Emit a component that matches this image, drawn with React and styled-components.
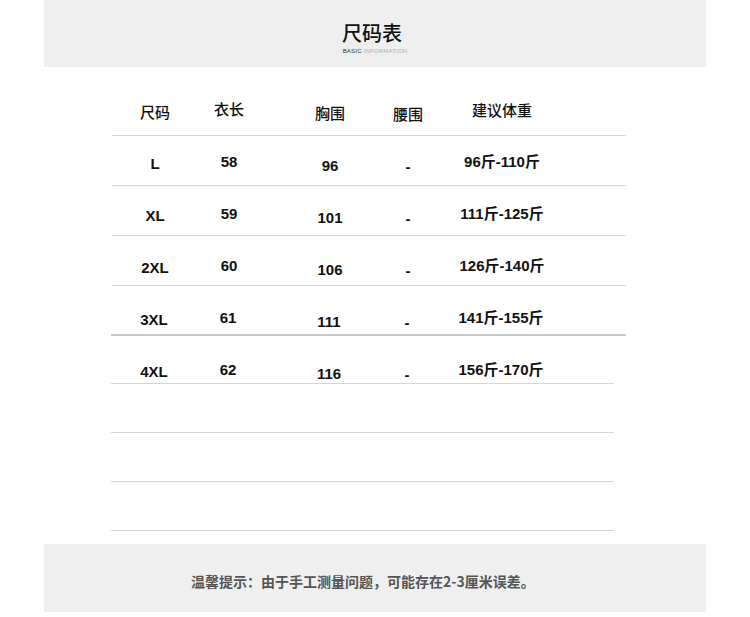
import styled, { createGlobalStyle } from "styled-components";

const GlobalStyle = createGlobalStyle`
    body {
        margin: 0;
        background: #ffffff;
        font-family: "Liberation Sans", "Noto Sans CJK SC", sans-serif;
    }
`;

const columns = [
    { key: "size", title: "尺码", dy: 0, headDy: 0 },
    { key: "length", title: "衣长", dy: -2, headDy: -3 },
    { key: "chest", title: "胸围", dy: 2, headDy: 1 },
    { key: "waist", title: "腰围", dy: 3, headDy: 2 },
    { key: "weight", title: "建议体重", dy: -2, headDy: -2 },
];

const rows = [
    { size: "L", length: "58", chest: "96", waist: "-", weight: "96斤-110斤" },
    { size: "XL", length: "59", chest: "101", waist: "-", weight: "111斤-125斤" },
    { size: "2XL", length: "60", chest: "106", waist: "-", weight: "126斤-140斤" },
    { size: "3XL", length: "61", chest: "111", waist: "-", weight: "141斤-155斤" },
    { size: "4XL", length: "62", chest: "116", waist: "-", weight: "156斤-170斤" },
];

const App = () => {
    return (
        <>
            <GlobalStyle />
            <Page>
                <Banner>
                    <Title>尺码表</Title>
                    <Subtitle>
                        <b>BASIC</b> INFORMATION
                    </Subtitle>
                </Banner>

                <Table>
                    <Row $inset={1} $width={514} $height={68} $line="#d6d6d6">
                        {columns.map((c) => (
                            <HeadCell key={c.key} $top={35 + c.headDy}>
                                {c.title}
                            </HeadCell>
                        ))}
                    </Row>
                    {rows.map((r, i) => {
                        const last = i === rows.length - 1;
                        const thick = i === 3;
                        return (
                            <Row
                                key={r.size}
                                $inset={i < 3 ? 1 : 0}
                                $width={last ? 503 : i < 3 ? 514 : 515}
                                $height={last ? 47 : thick ? 48 : 49}
                                $thick={thick}
                                $line={thick ? "#c9c9c9" : "#d6d6d6"}
                            >
                                {columns.map((c) => (
                                    <Cell key={c.key} $top={18 + i * 2 + c.dy}>
                                        {r[c.key]}
                                    </Cell>
                                ))}
                            </Row>
                        );
                    })}
                    <Row $width={503} $height={48} $line="#d6d6d6" />
                    <Row $width={503} $height={48} $line="#d6d6d6" />
                    <Row $width={503} $height={48} $line="#d6d6d6" />
                </Table>

                <Notice>温馨提示：由于手工测量问题，可能存在2-3厘米误差。</Notice>
            </Page>
        </>
    );
};

const Page = styled.div`
    width: 750px;
    height: 617px;
    display: flex;
    flex-direction: column;
`;

const Banner = styled.div`
    margin: 0 44px;
    height: 67px;
    background-color: #efefef;
    display: flex;
    flex-direction: column;
    align-items: center;
    padding-top: 22px;
    box-sizing: border-box;
`;

const Title = styled.div`
    font-family: "Noto Sans CJK SC", sans-serif;
    font-weight: 500;
    font-size: 20px;
    line-height: 22px;
    color: #111;
    margin-left: -6px;
`;

const Subtitle = styled.div`
    font-family: "Liberation Sans", sans-serif;
    font-size: 6px;
    line-height: 8px;
    margin-top: 3px;
    color: #b0b0b0;
    letter-spacing: 0.2px;

    b {
        font-weight: normal;
        color: #333;
    }
`;

const Table = styled.div`
    display: flex;
    flex-direction: column;
    padding-left: 111px;
`;

const Row = styled.div`
    display: grid;
    grid-template-columns: 86px 62px 140px 16px 172px;
    margin-left: ${(p) => p.$inset || 0}px;
    width: ${(p) => p.$width}px;
    height: ${(p) => p.$height}px;
    border-bottom: ${(p) => (p.$thick ? 2 : 1)}px solid ${(p) => p.$line};
`;

const Cell = styled.div`
    display: flex;
    justify-content: center;
    align-items: flex-start;
    white-space: nowrap;
    padding-top: ${(p) => p.$top}px;
    font-family: "Liberation Sans", "Noto Sans CJK SC", sans-serif;
    font-weight: bold;
    font-size: 15px;
    line-height: 20px;
    color: #111;
`;

const HeadCell = styled(Cell)`
    font-family: "Noto Sans CJK SC", sans-serif;
    font-weight: 500;
    font-size: 15px;
`;

const Notice = styled.div`
    margin: 13px 44px 0;
    height: 68px;
    background-color: #efefef;
    display: flex;
    align-items: center;
    padding: 6px 0 0 147px;
    box-sizing: border-box;
    font-family: "Noto Sans CJK SC", sans-serif;
    font-weight: bold;
    font-size: 14px;
    color: #555;
    white-space: nowrap;
`;

export default App;
